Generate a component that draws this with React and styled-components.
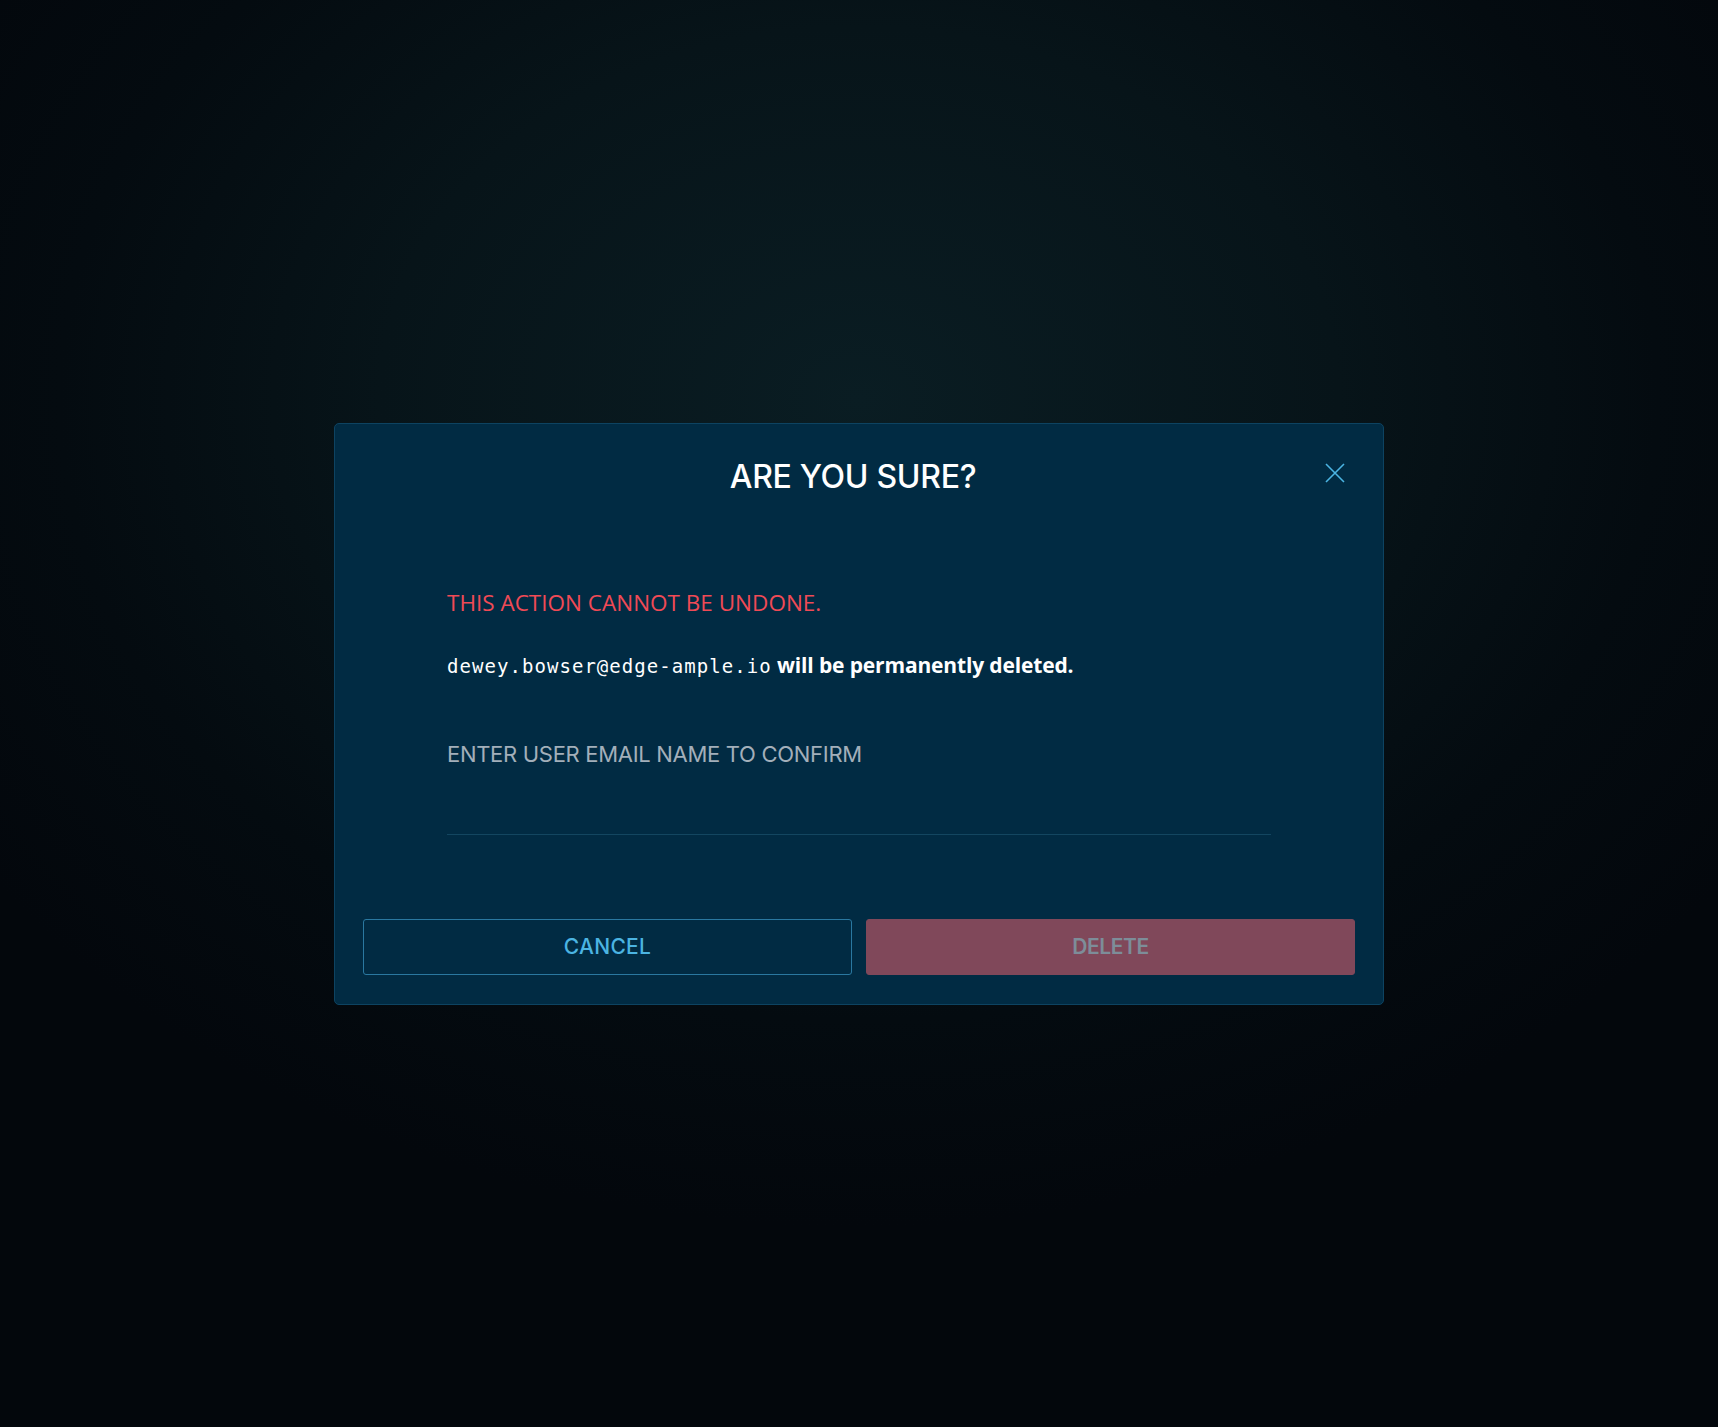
import styled, { createGlobalStyle } from "styled-components";

const GlobalStyle = createGlobalStyle`
  html, body {
    margin: 0;
    padding: 0;
    height: 100%;
  }
  body {
    background: #03080d;
  }
  #root {
    height: 100%;
  }
`;

const Backdrop = styled.div`
  display: flex;
  align-items: center;
  justify-content: center;
  width: 100%;
  height: 100vh;
  background: radial-gradient(
    ellipse 62% 58% at 50% 28%,
    #0a1d23 0%,
    #071419 45%,
    #040b10 75%,
    #03070c 100%
  );
`;

const Modal = styled.div`
  display: flex;
  flex-direction: column;
  width: 1050px;
  box-sizing: border-box;
  background: #012b43;
  border: 1px solid #0d4361;
  border-radius: 5px;
  padding: 33px 28px 29px;
`;

const Header = styled.div`
  display: flex;
  align-items: flex-start;
  padding: 0 10px 0 18px;
`;

const Title = styled.h2`
  flex: 1;
  margin: 0;
  text-align: center;
  font-family: "Inter", "Lato", sans-serif;
  font-weight: 500;
  font-size: 32px;
  line-height: 40px;
  letter-spacing: -0.3px;
  color: #ffffff;
`;

const CloseButton = styled.button`
  display: grid;
  place-items: center;
  width: 20px;
  height: 20px;
  margin-top: 6px;
  padding: 0;
  border: 0;
  background: none;
  cursor: pointer;
  color: #4bb4e2;
`;

const Body = styled.div`
  display: flex;
  flex-direction: column;
  padding: 0 84px;
  margin-top: 92px;
`;

const Warning = styled.p`
  margin: 0;
  font-family: "Open Sans", "Noto Sans", sans-serif;
  font-size: 22.5px;
  line-height: 28px;
  color: #f04a56;
`;

const Message = styled.p`
  margin: 34px 0 0;
  font-family: "Open Sans", "Noto Sans", sans-serif;
  font-weight: 700;
  font-size: 21px;
  line-height: 28px;
  letter-spacing: -0.15px;
  color: #ffffff;
`;

const Email = styled.code`
  font-family: "DejaVu Sans Mono", "Liberation Mono", monospace;
  font-weight: 400;
  font-size: 19px;
  letter-spacing: 1.05px;
`;

const Field = styled.label`
  display: flex;
  flex-direction: column;
  margin-top: 60px;
  border-bottom: 1px solid #134660;
  padding-bottom: 66px;
`;

const FieldLabel = styled.span`
  font-family: "Inter", "Lato", sans-serif;
  font-weight: 400;
  font-size: 22px;
  line-height: 28px;
  letter-spacing: -0.3px;
  color: #a3afba;
`;

const Actions = styled.div`
  display: grid;
  grid-template-columns: 1fr 1fr;
  gap: 14px;
  margin-top: 84px;
`;

const Button = styled.button`
  height: 56px;
  border-radius: 3px;
  font-family: "Inter", "Lato", sans-serif;
  font-size: 21px;
  cursor: pointer;
  border: 1px solid ${p => (p.$danger ? "#80485a" : "#2a78a0")};
  background: ${p => (p.$danger ? "#80485a" : "transparent")};
  color: ${p => (p.$danger ? "#7d8d99" : "#4bb4e2")};
  font-weight: ${p => (p.$danger ? 600 : 500)};
  letter-spacing: ${p => (p.$danger ? "-0.4px" : "0.3px")};
`;

const App = () => (
  <>
    <GlobalStyle />
    <Backdrop>
      <Modal>
        <Header>
          <Title>ARE YOU SURE?</Title>
          <CloseButton aria-label="close">
            <svg width="20" height="20" viewBox="0 0 20 20">
              <path
                d="M1 1 L19 19 M19 1 L1 19"
                stroke="currentColor"
                strokeWidth="1.6"
                fill="none"
              />
            </svg>
          </CloseButton>
        </Header>
        <Body>
          <Warning>THIS ACTION CANNOT BE UNDONE.</Warning>
          <Message>
            <Email>dewey.bowser@edge-ample.io</Email> will be permanently
            deleted.
          </Message>
          <Field>
            <FieldLabel>ENTER USER EMAIL NAME TO CONFIRM</FieldLabel>
          </Field>
        </Body>
        <Actions>
          <Button>CANCEL</Button>
          <Button $danger>DELETE</Button>
        </Actions>
      </Modal>
    </Backdrop>
  </>
);

export default App;
